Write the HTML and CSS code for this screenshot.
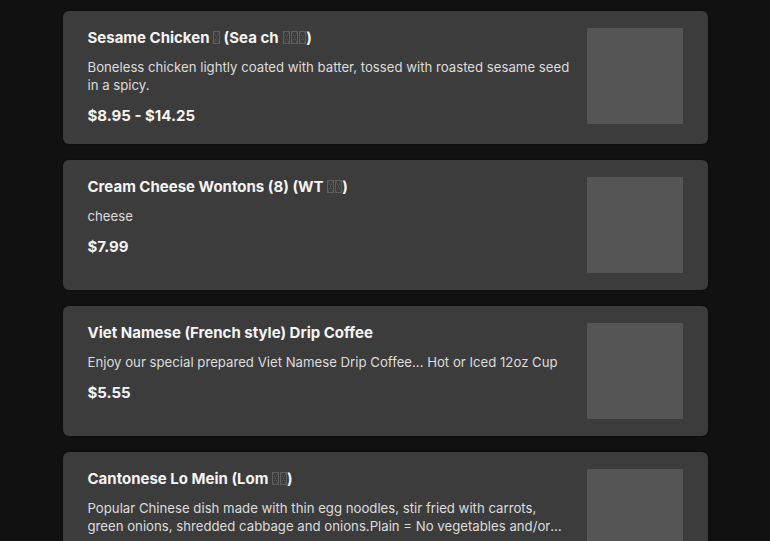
FILE: index.html
```html
<!DOCTYPE html>
<html lang="en">
<head>
<meta charset="utf-8">
<link rel="stylesheet" href="styles.css">
</head>
<body>
<main class="menu">
  <article class="card">
    <div class="info">
      <h3 class="title">Sesame Chicken <span class="tofu"></span> (Sea ch <span class="tofu"></span><span class="tofu"></span><span class="tofu"></span>)</h3>
      <p class="desc">Boneless chicken lightly coated with batter, tossed with roasted sesame seed in a spicy.</p>
      <p class="price">$8.95 - $14.25</p>
    </div>
    <div class="thumb"></div>
  </article>
  <article class="card">
    <div class="info">
      <h3 class="title">Cream Cheese Wontons (8) (WT <span class="tofu"></span><span class="tofu"></span>)</h3>
      <p class="desc">cheese</p>
      <p class="price">$7.99</p>
    </div>
    <div class="thumb"></div>
  </article>
  <article class="card">
    <div class="info">
      <h3 class="title">Viet Namese (French style) Drip Coffee</h3>
      <p class="desc">Enjoy our special prepared Viet Namese Drip Coffee... Hot or Iced 12oz Cup</p>
      <p class="price">$5.55</p>
    </div>
    <div class="thumb"></div>
  </article>
  <article class="card">
    <div class="info">
      <h3 class="title">Cantonese Lo Mein (Lom <span class="tofu"></span><span class="tofu"></span>)</h3>
      <p class="desc clamp">Popular Chinese dish made with thin egg noodles, stir fried with carrots, green onions, shredded cabbage and onions.Plain = No vegetables and/or meat. Choose your favorite protein.</p>
    </div>
    <div class="thumb"></div>
  </article>
</main>
</body>
</html>
```
FILE: styles.css
```css
* { box-sizing: border-box; }
html, body { margin: 0; padding: 0; }
body {
  background: #111111;
  font-family: "Inter", "Noto Sans", sans-serif;
  color: #f2f2f2;
}
.menu {
  width: 645px;
  margin: 11px auto 0;
  display: flex;
  flex-direction: column;
  gap: 16px;
}
.card {
  background: #3c3c3c;
  border-radius: 6px;
  padding: 17px 25px;
  display: flex;
  gap: 16px;
  align-items: flex-start;
  box-shadow: 0 0 2px rgba(0,0,0,0.6);
}
.info { flex: 1; min-width: 0; }
.title {
  margin: 0;
  font-size: 15px;
  line-height: 20px;
  font-weight: 700;
  color: #f4f4f4;
}
.desc {
  margin: 10px 0 0;
  font-size: 13.2px;
  line-height: 18px;
  color: #dcdcdc;
}
.clamp {
  display: -webkit-box;
  -webkit-line-clamp: 2;
  -webkit-box-orient: vertical;
  overflow: hidden;
}
.price {
  margin: 11px 0 0;
  font-size: 15px;
  line-height: 22px;
  font-weight: 700;
  color: #f4f4f4;
}
.thumb {
  flex: 0 0 96px;
  width: 96px;
  height: 96px;
  background: #555555;
  border-radius: 1px;
}
.tofu {
  display: inline-block;
  width: 7px;
  height: 13px;
  vertical-align: -1px;
  border: 1px solid #5e5e5e;
  background:
    linear-gradient(to top right, transparent 45%, #5e5e5e 50%, transparent 55%),
    linear-gradient(to bottom right, transparent 45%, #5e5e5e 50%, transparent 55%);
}
.tofu + .tofu { margin-left: 1px; }
```
